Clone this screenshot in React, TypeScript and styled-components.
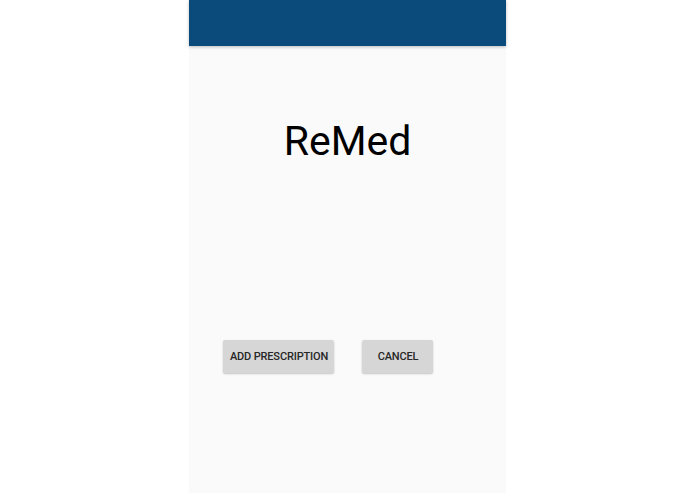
import styled, { createGlobalStyle } from "styled-components";

const GlobalStyle = createGlobalStyle`
    html, body {
        margin: 0;
        padding: 0;
        background: #ffffff;
        font-family: Roboto, "Noto Sans", sans-serif;
    }
`;

const Page = styled.div`
    display: flex;
    justify-content: flex-start;
    padding-left: 189px;
`;

const Screen = styled.div`
    width: 317px;
    height: 493px;
    background: #fafafa;
    display: flex;
    flex-direction: column;
`;

const AppBar = styled.div`
    height: 46px;
    flex-shrink: 0;
    background: #0b4b7c;
    box-shadow: 0 1px 3px rgba(0, 0, 0, 0.25);
`;

const Title = styled.h1`
    margin: 75px 0 0;
    font-size: 41px;
    line-height: 40px;
    font-weight: 400;
    color: #000000;
    text-align: center;
`;

const Actions = styled.div`
    display: flex;
    gap: 28px;
    margin-top: 179px;
    padding-left: 34px;
`;

const Button = styled.button<{ $width: number }>`
    width: ${(p) => p.$width}px;
    height: 33px;
    border: none;
    border-radius: 2px;
    background: #d6d6d6;
    color: #262626;
    font-family: Roboto, sans-serif;
    font-size: 11px;
    font-weight: 500;
    letter-spacing: -0.15px;
    text-transform: uppercase;
    box-shadow: 0 1px 2px rgba(0, 0, 0, 0.22);
    padding: 0 0 0 1px;
`;

export default function App() {
    return (
        <>
            <GlobalStyle />
            <Page>
                <Screen>
                    <AppBar />
                    <Title>ReMed</Title>
                    <Actions>
                        <Button $width={111}>Add Prescription</Button>
                        <Button $width={71}>Cancel</Button>
                    </Actions>
                </Screen>
            </Page>
        </>
    );
}
